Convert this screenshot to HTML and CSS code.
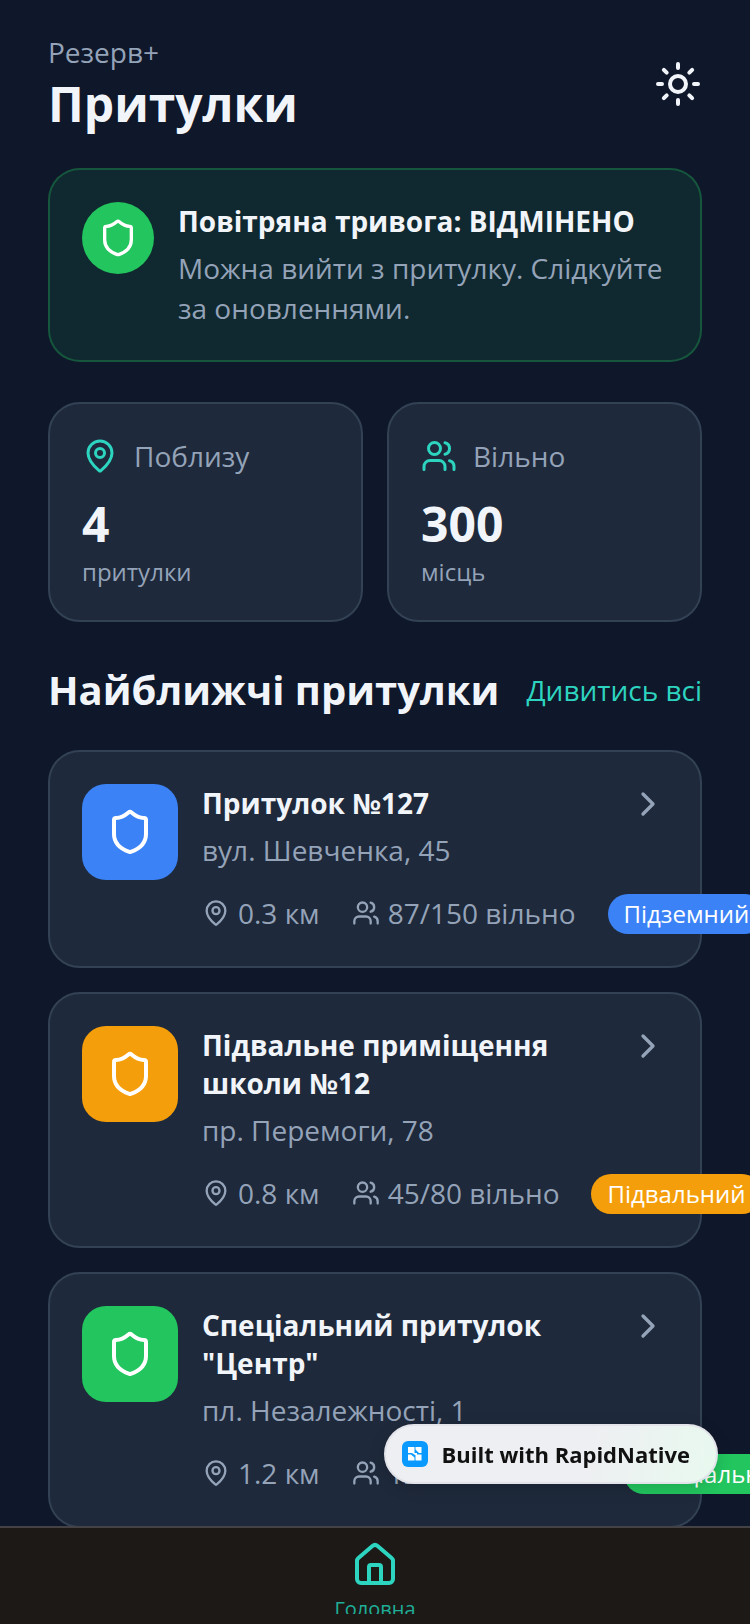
FILE: index.html
```html
<!DOCTYPE html>
<html lang="uk">
<head>
    <meta charset="UTF-8">
    <meta name="viewport" content="width=device-width, initial-scale=1.0">
    <title>Резерв+ | Притулки</title>
    <link rel="stylesheet" href="styles.css">
</head>
<body>
    <!-- Shared icons -->
    <svg class="sprite" aria-hidden="true">
        <symbol id="shield" viewBox="0 0 24 24">
            <path d="M20 13c0 5-3.500 7.500-7.660 8.950a1 1 0 0 1-.67-.01C7.500 20.500 4 18 4 13V6a1 1 0 0 1 1-1c2 0 4.500-1.200 6.240-2.720a1.170 1.170 0 0 1 1.520 0C14.510 3.810 17 5 19 5a1 1 0 0 1 1 1z"/>
        </symbol>
        <symbol id="pin" viewBox="0 0 24 24">
            <path d="M20 10c0 4.993-5.539 10.193-7.399 11.799a1 1 0 0 1-1.202 0C9.539 20.193 4 14.993 4 10a8 8 0 0 1 16 0"/>
            <circle cx="12" cy="10" r="3"/>
        </symbol>
        <symbol id="users" viewBox="0 0 24 24">
            <path d="M16 21v-2a4 4 0 0 0-4-4H6a4 4 0 0 0-4 4v2"/>
            <circle cx="9" cy="7" r="4"/>
            <path d="M22 21v-2a4 4 0 0 0-3-3.870"/>
            <path d="M16 3.130a4 4 0 0 1 0 7.750"/>
        </symbol>
        <symbol id="chevron" viewBox="0 0 24 24">
            <path d="m9 18 6-6-6-6"/>
        </symbol>
    </svg>

    <div class="app">
        <main class="screen">
            <header class="header">
                <div>
                    <p class="app-name">Резерв+</p>
                    <h1>Притулки</h1>
                </div>
                <button class="theme-toggle" aria-label="Змінити тему">
                    <svg class="icon icon-xl" viewBox="0 0 24 24">
                        <circle cx="12" cy="12" r="4"/>
                        <path d="M12 2v2M12 20v2M4.930 4.930l1.410 1.410M17.660 17.660l1.410 1.410M2 12h2M20 12h2M6.340 17.660l-1.410 1.410M19.070 4.930l-1.410 1.410"/>
                    </svg>
                </button>
            </header>

            <section class="alert">
                <div class="alert-icon"><svg class="icon icon-lg"><use href="#shield"/></svg></div>
                <div class="alert-text">
                    <h2 class="name">Повітряна тривога: ВІДМІНЕНО</h2>
                    <p>Можна вийти з притулку. Слідкуйте за оновленнями.</p>
                </div>
            </section>

            <section class="stats">
                <div class="card">
                    <div class="stat-label"><svg class="icon icon-md"><use href="#pin"/></svg>Поблизу</div>
                    <p class="stat-value">4</p>
                    <p class="stat-unit">притулки</p>
                </div>
                <div class="card">
                    <div class="stat-label"><svg class="icon icon-md"><use href="#users"/></svg>Вільно</div>
                    <p class="stat-value">300</p>
                    <p class="stat-unit">місць</p>
                </div>
            </section>

            <div class="section-head">
                <h2>Найближчі притулки</h2>
                <a href="#all">Дивитись всі</a>
            </div>

            <section class="shelters" id="all">
                <article class="card shelter blue">
                    <div class="shelter-icon"><svg class="icon icon-xl"><use href="#shield"/></svg></div>
                    <div class="shelter-body">
                        <div class="shelter-top">
                            <div>
                                <h3 class="name">Притулок №127</h3>
                                <p>вул. Шевченка, 45</p>
                            </div>
                            <svg class="icon icon-lg"><use href="#chevron"/></svg>
                        </div>
                        <div class="meta">
                            <span class="meta-item"><svg class="icon icon-sm"><use href="#pin"/></svg>0.3 км</span>
                            <span class="meta-item"><svg class="icon icon-sm"><use href="#users"/></svg>87/150 вільно</span>
                            <span class="tag">Підземний</span>
                        </div>
                    </div>
                </article>

                <article class="card shelter orange">
                    <div class="shelter-icon"><svg class="icon icon-xl"><use href="#shield"/></svg></div>
                    <div class="shelter-body">
                        <div class="shelter-top">
                            <div>
                                <h3 class="name">Підвальне приміщення школи №12</h3>
                                <p>пр. Перемоги, 78</p>
                            </div>
                            <svg class="icon icon-lg"><use href="#chevron"/></svg>
                        </div>
                        <div class="meta">
                            <span class="meta-item"><svg class="icon icon-sm"><use href="#pin"/></svg>0.8 км</span>
                            <span class="meta-item"><svg class="icon icon-sm"><use href="#users"/></svg>45/80 вільно</span>
                            <span class="tag">Підвальний</span>
                        </div>
                    </div>
                </article>

                <article class="card shelter green">
                    <div class="shelter-icon"><svg class="icon icon-xl"><use href="#shield"/></svg></div>
                    <div class="shelter-body">
                        <div class="shelter-top">
                            <div>
                                <h3 class="name">Спеціальний притулок "Центр"</h3>
                                <p>пл. Незалежності, 1</p>
                            </div>
                            <svg class="icon icon-lg"><use href="#chevron"/></svg>
                        </div>
                        <div class="meta">
                            <span class="meta-item"><svg class="icon icon-sm"><use href="#pin"/></svg>1.2 км</span>
                            <span class="meta-item"><svg class="icon icon-sm"><use href="#users"/></svg>120/200 вільно</span>
                            <span class="tag">Спеціальний</span>
                        </div>
                    </div>
                </article>
            </section>
        </main>

        <nav class="tab-bar">
            <a class="tab" href="#home">
                <svg class="icon icon-xl" viewBox="0 0 24 24">
                    <path d="M15 21v-8a1 1 0 0 0-1-1h-4a1 1 0 0 0-1 1v8"/>
                    <path d="M3 10a2 2 0 0 1 .709-1.528l7-5.999a2 2 0 0 1 2.582 0l7 5.999A2 2 0 0 1 21 10v9a2 2 0 0 1-2 2H5a2 2 0 0 1-2-2z"/>
                </svg>
                <span>Головна</span>
            </a>
        </nav>
    </div>

    <a class="built-with" href="#rapidnative">
        <svg class="logo" viewBox="0 0 26 26">
            <rect width="26" height="26" rx="6" fill="#0a99ff"/>
            <path fill="#fff" d="M6 6h6.500v6H6zM13.500 6h6v6h-2.500l-3.500-3.500zM6 13.500h3l3.500 3v3H6zM13.500 13.500h6v6h-6zM10 12h5v2h-2z"/>
        </svg>
        Built with RapidNative
    </a>
</body>
</html>
```

FILE: styles.css
```css
* {
    box-sizing: border-box;
    margin: 0;
    padding: 0;
}
body {
    font-family: "Open Sans", "Noto Sans", sans-serif;
    font-size: 28px;
    line-height: 40px;
    color: #94a3b8;
    background: #0f172a;
}
a {
    text-decoration: none;
}
h1 {
    font-size: 48px;
    line-height: 64px;
    color: #f1f5f9;
}
.sprite {
    display: none;
}
.app {
    display: flex;
    flex-direction: column;
    height: 100vh;
}
.screen {
    flex: 1;
    min-height: 0;
    padding: 32px 48px 0;
    overflow-x: hidden;
    overflow-y: auto;
    scrollbar-width: none;
}

/* Icons */
.icon {
    flex-shrink: 0;
    display: block;
    fill: none;
    stroke: currentColor;
    stroke-width: 2;
    stroke-linecap: round;
    stroke-linejoin: round;
}
.icon-sm {
    width: 28px;
    height: 28px;
}
.icon-md {
    width: 36px;
    height: 36px;
}
.icon-lg {
    width: 40px;
    height: 40px;
}
.icon-xl {
    width: 48px;
    height: 48px;
}

/* Header */
.header {
    display: flex;
    justify-content: space-between;
    align-items: center;
    margin-bottom: 32px;
}
.theme-toggle {
    border: none;
    background: none;
    color: #f1f5f9;
    cursor: pointer;
}

/* Cards */
.card,
.alert {
    border: 2px solid #334155;
    border-radius: 32px;
    padding: 32px;
    background: #1e293b;
}
.name {
    font-size: 28px;
    font-weight: bold;
    line-height: 38px;
    margin-bottom: 8px;
    color: #f1f5f9;
}
.alert {
    display: flex;
    gap: 24px;
    margin-bottom: 40px;
    border-color: rgba(34, 197, 94, 0.3);
    background: rgba(34, 197, 94, 0.1);
}
.alert-icon {
    display: flex;
    justify-content: center;
    align-items: center;
    flex-shrink: 0;
    width: 72px;
    height: 72px;
    border-radius: 50%;
    color: white;
    background: #22c55e;
}

/* Stats */
.stats {
    display: grid;
    grid-template-columns: 1fr 1fr;
    gap: 24px;
    margin-bottom: 40px;
}
.stat-label {
    display: flex;
    align-items: center;
    gap: 16px;
    margin-bottom: 16px;
}
.stat-label .icon {
    color: #2dd4bf;
}
.stat-value {
    font-size: 48px;
    font-weight: bold;
    line-height: 64px;
    color: #f1f5f9;
}
.stat-unit {
    font-size: 24px;
    line-height: 32px;
}

/* Shelters */
.section-head {
    display: flex;
    justify-content: space-between;
    align-items: center;
    margin-bottom: 32px;
}
.section-head h2 {
    font-size: 40px;
    line-height: 56px;
    color: #f1f5f9;
}
.section-head a {
    color: #2dd4bf;
}
.shelters {
    display: flex;
    flex-direction: column;
    gap: 24px;
}
.shelter {
    display: flex;
    gap: 24px;
}
.shelter-icon {
    display: flex;
    justify-content: center;
    align-items: center;
    flex-shrink: 0;
    width: 96px;
    height: 96px;
    border-radius: 24px;
    color: white;
}
.shelter-body {
    flex: 1;
    min-width: 0;
}
.shelter-top {
    display: flex;
    justify-content: space-between;
    gap: 16px;
    margin-bottom: 24px;
}
.meta {
    display: flex;
    align-items: center;
    gap: 32px;
    white-space: nowrap;
}
.meta-item {
    display: flex;
    align-items: center;
    gap: 8px;
    padding-bottom: 2px;
    line-height: 38px;
}
.tag {
    padding: 4px 16px;
    border-radius: 20px;
    font-size: 24px;
    line-height: 32px;
    color: white;
}
.blue .shelter-icon,
.blue .tag {
    background: #3b82f6;
}
.orange .shelter-icon,
.orange .tag {
    background: #f59e0b;
}
.green .shelter-icon,
.green .tag {
    background: #22c55e;
}

/* Bottom navigation */
.tab-bar {
    display: flex;
    justify-content: center;
    padding-bottom: 10px;
    border-top: 2px solid #444244;
    background: #1c1917;
}
.tab {
    display: flex;
    flex-direction: column;
    align-items: center;
    gap: 6px;
    height: 86px;
    padding-top: 13px;
    overflow: hidden;
    font-size: 20px;
    line-height: 28px;
    color: #2dd4bf;
}
.tab span {
    color: #1fae97;
}

/* Floating badge */
.built-with {
    position: fixed;
    right: 32px;
    bottom: 140px;
    display: flex;
    align-items: center;
    gap: 13px;
    height: 60px;
    padding: 0 26px 0 16px;
    border: 2px solid #e2e4e9;
    border-radius: 30px;
    font-size: 22px;
    font-weight: bold;
    color: #111;
    background: linear-gradient(105deg, #eeeff2 60%, #e8f9ef);
    box-shadow: 0 4px 16px rgba(0, 0, 0, 0.15);
}
.logo {
    width: 26px;
    height: 26px;
}
```
